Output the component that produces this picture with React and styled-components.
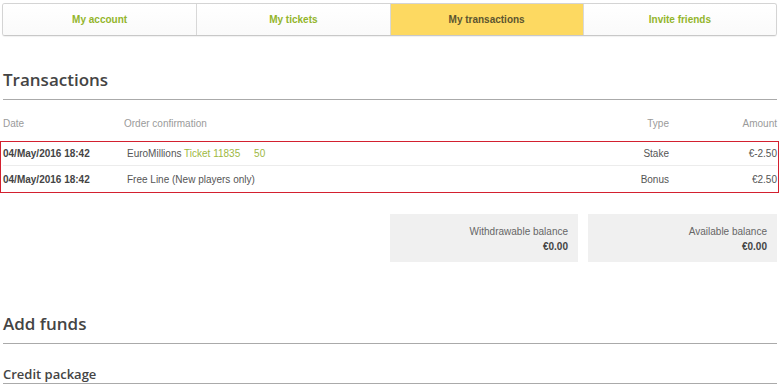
import React from "react";
import styled, { createGlobalStyle } from "styled-components";

const Global = createGlobalStyle`
  html, body { margin: 0; padding: 0; background: #fff; }
  body { font-family: "Liberation Sans", Arial, sans-serif; }
`;

const Page = styled.div`
  width: 775px;
  padding: 3px 0 0 2px;
`;

const Tabs = styled.nav`
  display: grid;
  grid-template-columns: repeat(4, 1fr);
  height: 33px;
  border: 1px solid #d4d4d4;
  border-bottom-color: #c8c8c8;
  border-radius: 3px;
  box-sizing: border-box;
  overflow: hidden;
  box-shadow: 0 1px 1px rgba(0,0,0,0.06);
`;

const Tab = styled.div`
  display: flex;
  align-items: center;
  justify-content: center;
  font-size: 10px;
  font-weight: bold;
  color: ${(p) => (p.$active ? "#5c5530" : "#93b52b")};
  background: ${(p) => (p.$active ? "#fdd961" : "linear-gradient(#fff, #fafafa)")};
  border-left: ${(p) => (p.$first ? "none" : "1px solid #d8d8d8")};
`;

const Section = styled.section`
  margin-left: 1px;
`;

const Heading = styled.h2`
  margin: ${(p) => p.$top} 0 0;
  font-family: "Open Sans", sans-serif;
  font-weight: 600;
  font-size: 17px;
  line-height: 24px;
  color: #444;
  padding-bottom: 7px;
  border-bottom: 1px solid #aaa;
`;

const SubHeading = styled.h3`
  margin: 21px 0 0;
  font-family: "Open Sans", sans-serif;
  font-weight: 600;
  font-size: 13px;
  line-height: 18px;
  color: #444;
  border-bottom: 1px solid #aaa;
`;

const Row = styled.div`
  display: grid;
  grid-template-columns: 121px 1fr 120px 108px;
  align-items: center;
  font-size: 10px;
  height: ${(p) => p.$h || "26px"};
  box-sizing: border-box;
  color: #555;
  border-top: ${(p) => (p.$sep ? "1px solid #ececec" : "none")};
`;

const HeadRow = styled(Row)`
  color: #9a9a9a;
  height: 41px;
  padding-top: 5px;
`;

const Cell = styled.div`
  text-align: ${(p) => (p.$right ? "right" : "left")};
  font-weight: ${(p) => (p.$bold ? "bold" : "normal")};
  color: ${(p) => (p.$bold ? "#444" : "inherit")};
  padding-left: ${(p) => p.$pl || "0"};
  white-space: pre;
`;

const Green = styled.span`
  color: #9db83f;
`;

const Highlight = styled.div`
  margin: 0 -2px 0 -3px;
  padding: 0 1px 0 2px;
  border: 1px solid #d3202f;
`;

const Balances = styled.div`
  display: grid;
  grid-template-columns: 188px 189px;
  gap: 10px;
  justify-content: end;
  margin-top: 21px;
`;

const Balance = styled.div`
  background: #f0f0f0;
  height: 48px;
  box-sizing: border-box;
  padding: 10px 10px 0 0;
  text-align: right;
  font-size: 10px;
  line-height: 15px;
  color: #666;
`;

const Value = styled.div`
  font-weight: bold;
  color: #444;
`;

export default function App() {
  return (
    <>
      <Global />
      <Page>
        <Tabs>
          <Tab $first>My account</Tab>
          <Tab>My tickets</Tab>
          <Tab $active>My transactions</Tab>
          <Tab>Invite friends</Tab>
        </Tabs>
        <Section>
          <Heading $top="32px">Transactions</Heading>
          <HeadRow>
            <Cell>Date</Cell>
            <Cell>Order confirmation</Cell>
            <Cell $right>Type</Cell>
            <Cell $right>Amount</Cell>
          </HeadRow>
          <Highlight>
            <Row $h="23px">
              <Cell $bold>04/May/2016 18:42</Cell>
              <Cell $pl="3px">
                EuroMillions <Green>Ticket 11835     50</Green>
              </Cell>
              <Cell $right>Stake</Cell>
              <Cell $right>€-2.50</Cell>
            </Row>
            <Row $sep $h="27px">
              <Cell $bold>04/May/2016 18:42</Cell>
              <Cell $pl="3px">Free Line (New players only)</Cell>
              <Cell $right>Bonus</Cell>
              <Cell $right>€2.50</Cell>
            </Row>
          </Highlight>
          <Balances>
            <Balance>
              Withdrawable balance
              <Value>€0.00</Value>
            </Balance>
            <Balance>
              Available balance
              <Value>€0.00</Value>
            </Balance>
          </Balances>
          <Heading $top="50px">Add funds</Heading>
          <SubHeading>Credit package</SubHeading>
        </Section>
      </Page>
    </>
  );
}
